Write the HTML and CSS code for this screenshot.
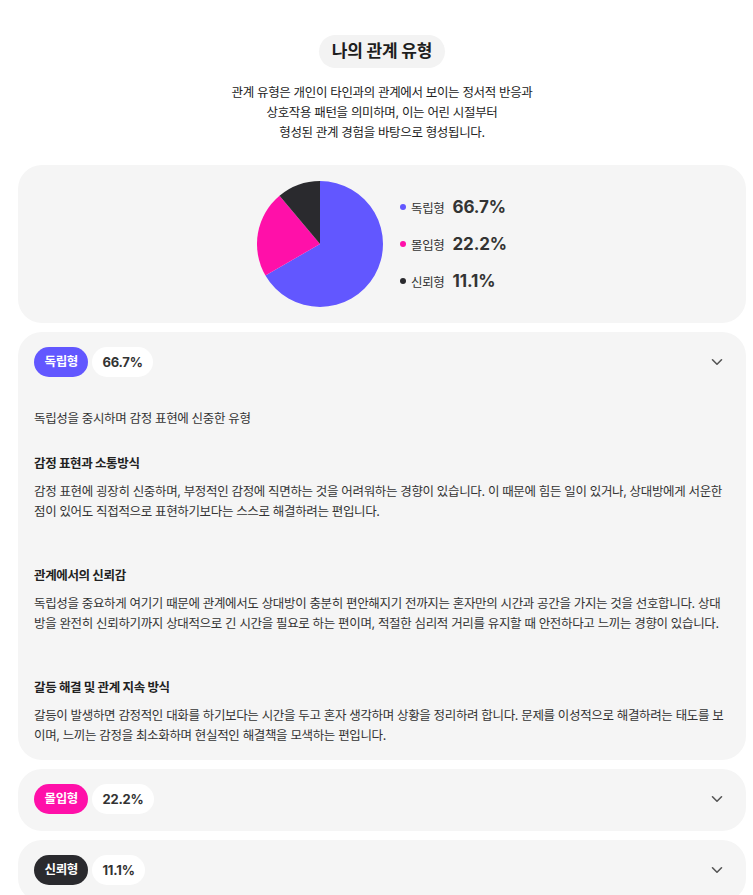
FILE: index.html
```html
<!DOCTYPE html>
<html lang="ko">
<head>
<meta charset="utf-8">
<link rel="stylesheet" href="styles.css">
</head>
<body>
<main class="page">
  <header class="intro">
    <h1 class="title">나의 관계 유형</h1>
    <p class="lead">관계 유형은 개인이 타인과의 관계에서 보이는 정서적 반응과<br>상호작용 패턴을 의미하며, 이는 어린 시절부터<br>형성된 관계 경험을 바탕으로 형성됩니다.</p>
  </header>

  <section class="card chart-card">
    <svg class="pie" width="126" height="126" viewBox="-63 -63 126 126">
      <path d="M0,0 L0,-63 A63,63 0 1 1 -54.56,31.5 Z" fill="#6257ff"/>
      <path d="M0,0 L-54.56,31.5 A63,63 0 0 1 -40.5,-48.26 Z" fill="#ff10a9"/>
      <path d="M0,0 L-40.5,-48.26 A63,63 0 0 1 0,-63 Z" fill="#2a2a2e"/>
    </svg>
    <ul class="legend">
      <li><span class="dot dot-indep"></span><span class="lg-label">독립형</span><span class="lg-value">66.7%</span></li>
      <li><span class="dot dot-immer"></span><span class="lg-label">몰입형</span><span class="lg-value">22.2%</span></li>
      <li><span class="dot dot-trust"></span><span class="lg-label">신뢰형</span><span class="lg-value">11.1%</span></li>
    </ul>
  </section>

  <section class="card acc">
    <div class="acc-head">
      <span class="badge badge-indep">독립형</span>
      <span class="pct">66.7%</span>
      <svg class="chev" width="12" height="8" viewBox="0 0 12 8"><path d="M1.5 1.8 L6 6.2 L10.5 1.8" fill="none" stroke="#555" stroke-width="1.6" stroke-linecap="round" stroke-linejoin="round"/></svg>
    </div>
    <div class="acc-body">
      <p class="summary">독립성을 중시하며 감정 표현에 신중한 유형</p>
      <div class="sections">
        <div class="sec">
          <h3>감정 표현과 소통방식</h3>
          <p>감정 표현에 굉장히 신중하며, 부정적인 감정에 직면하는 것을 어려워하는 경향이 있습니다. 이 때문에 힘든 일이 있거나, 상대방에게 서운한 점이 있어도 직접적으로 표현하기보다는 스스로 해결하려는 편입니다.</p>
        </div>
        <div class="sec">
          <h3>관계에서의 신뢰감</h3>
          <p>독립성을 중요하게 여기기 때문에 관계에서도 상대방이 충분히 편안해지기 전까지는 혼자만의 시간과 공간을 가지는 것을 선호합니다. 상대방을 완전히 신뢰하기까지 상대적으로 긴 시간을 필요로 하는 편이며, 적절한 심리적 거리를 유지할 때 안전하다고 느끼는 경향이 있습니다.</p>
        </div>
        <div class="sec">
          <h3>갈등 해결 및 관계 지속 방식</h3>
          <p>갈등이 발생하면 감정적인 대화를 하기보다는 시간을 두고 혼자 생각하며 상황을 정리하려 합니다. 문제를 이성적으로 해결하려는 태도를 보이며, 느끼는 감정을 최소화하며 현실적인 해결책을 모색하는 편입니다.</p>
        </div>
      </div>
    </div>
  </section>

  <section class="card acc">
    <div class="acc-head">
      <span class="badge badge-immer">몰입형</span>
      <span class="pct">22.2%</span>
      <svg class="chev" width="12" height="8" viewBox="0 0 12 8"><path d="M1.5 1.8 L6 6.2 L10.5 1.8" fill="none" stroke="#555" stroke-width="1.6" stroke-linecap="round" stroke-linejoin="round"/></svg>
    </div>
  </section>

  <section class="card acc">
    <div class="acc-head">
      <span class="badge badge-trust">신뢰형</span>
      <span class="pct">11.1%</span>
      <svg class="chev" width="12" height="8" viewBox="0 0 12 8"><path d="M1.5 1.8 L6 6.2 L10.5 1.8" fill="none" stroke="#555" stroke-width="1.6" stroke-linecap="round" stroke-linejoin="round"/></svg>
    </div>
  </section>
</main>
</body>
</html>
```

FILE: styles.css
```css
* { box-sizing: border-box; }
html, body { margin: 0; padding: 0; background: #fff; }
body {
  font-family: Inter, "Noto Sans CJK KR", sans-serif;
  color: #222;
  letter-spacing: -0.35px;
}
.page {
  width: 728px;
  margin-left: 18px;
  padding-top: 35px;
  display: flex;
  flex-direction: column;
  gap: 9px;
}
.intro {
  display: flex;
  flex-direction: column;
  align-items: center;
  margin-bottom: 13px;
}
.title {
  margin: 0;
  height: 33px;
  padding: 0 13px;
  border-radius: 17px;
  background: #f3f3f3;
  font-size: 17px;
  font-weight: 700;
  line-height: 33px;
  color: #1e1e1e;
  letter-spacing: -0.2px;
}
.lead {
  margin: 15px 0 0;
  font-size: 12.5px;
  line-height: 20px;
  text-align: center;
  color: #222;
}
.card {
  background: #f5f5f5;
  border-radius: 24px;
}
.chart-card {
  display: flex;
  justify-content: center;
  align-items: center;
  gap: 15px;
  padding: 16px;
}
.pie { display: block; }
.legend {
  list-style: none;
  margin: 0;
  padding: 0;
  display: flex;
  flex-direction: column;
  gap: 14px;
}
.legend li {
  display: flex;
  align-items: center;
  height: 23px;
}
.dot {
  width: 6px;
  height: 6px;
  border-radius: 50%;
  margin: 0 5px 0 2px;
}
.dot-indep { background: #6257ff; }
.dot-immer { background: #ff10a9; }
.dot-trust { background: #2a2a2e; }
.lg-label {
  font-size: 12.5px;
  color: #333;
  margin-right: 8px;
}
.lg-value {
  font-size: 17px;
  font-weight: 700;
  color: #333;
  letter-spacing: -0.1px;
}
.acc-head {
  display: flex;
  align-items: center;
  gap: 4px;
  padding: 15px 23px 17px 16px;
}
.badge {
  height: 30px;
  padding: 0 10.5px;
  border-radius: 15px;
  font-size: 12.5px;
  font-weight: 700;
  line-height: 30px;
  color: #fff;
}
.badge-indep { background: #6257ff; }
.badge-immer { background: #ff10a9; }
.badge-trust { background: #2a2a2e; }
.pct {
  height: 30px;
  padding: 0 10px;
  border-radius: 15px;
  background: #fff;
  font-size: 13px;
  font-weight: 700;
  line-height: 30px;
  color: #333;
  letter-spacing: -0.2px;
}
.chev { margin-left: auto; display: block; }
.acc-body {
  padding: 15px 16px 14px 16px;
}
.summary {
  margin: 0 0 25px;
  font-size: 12.5px;
  line-height: 20px;
  color: #333;
}
.sections {
  display: flex;
  flex-direction: column;
  gap: 44px;
}
.sec h3 {
  margin: 0 0 8px;
  font-size: 12.5px;
  font-weight: 700;
  line-height: 20px;
  color: #222;
}
.sec p {
  margin: 0;
  font-size: 12.5px;
  line-height: 20px;
  color: #333;
}
```
